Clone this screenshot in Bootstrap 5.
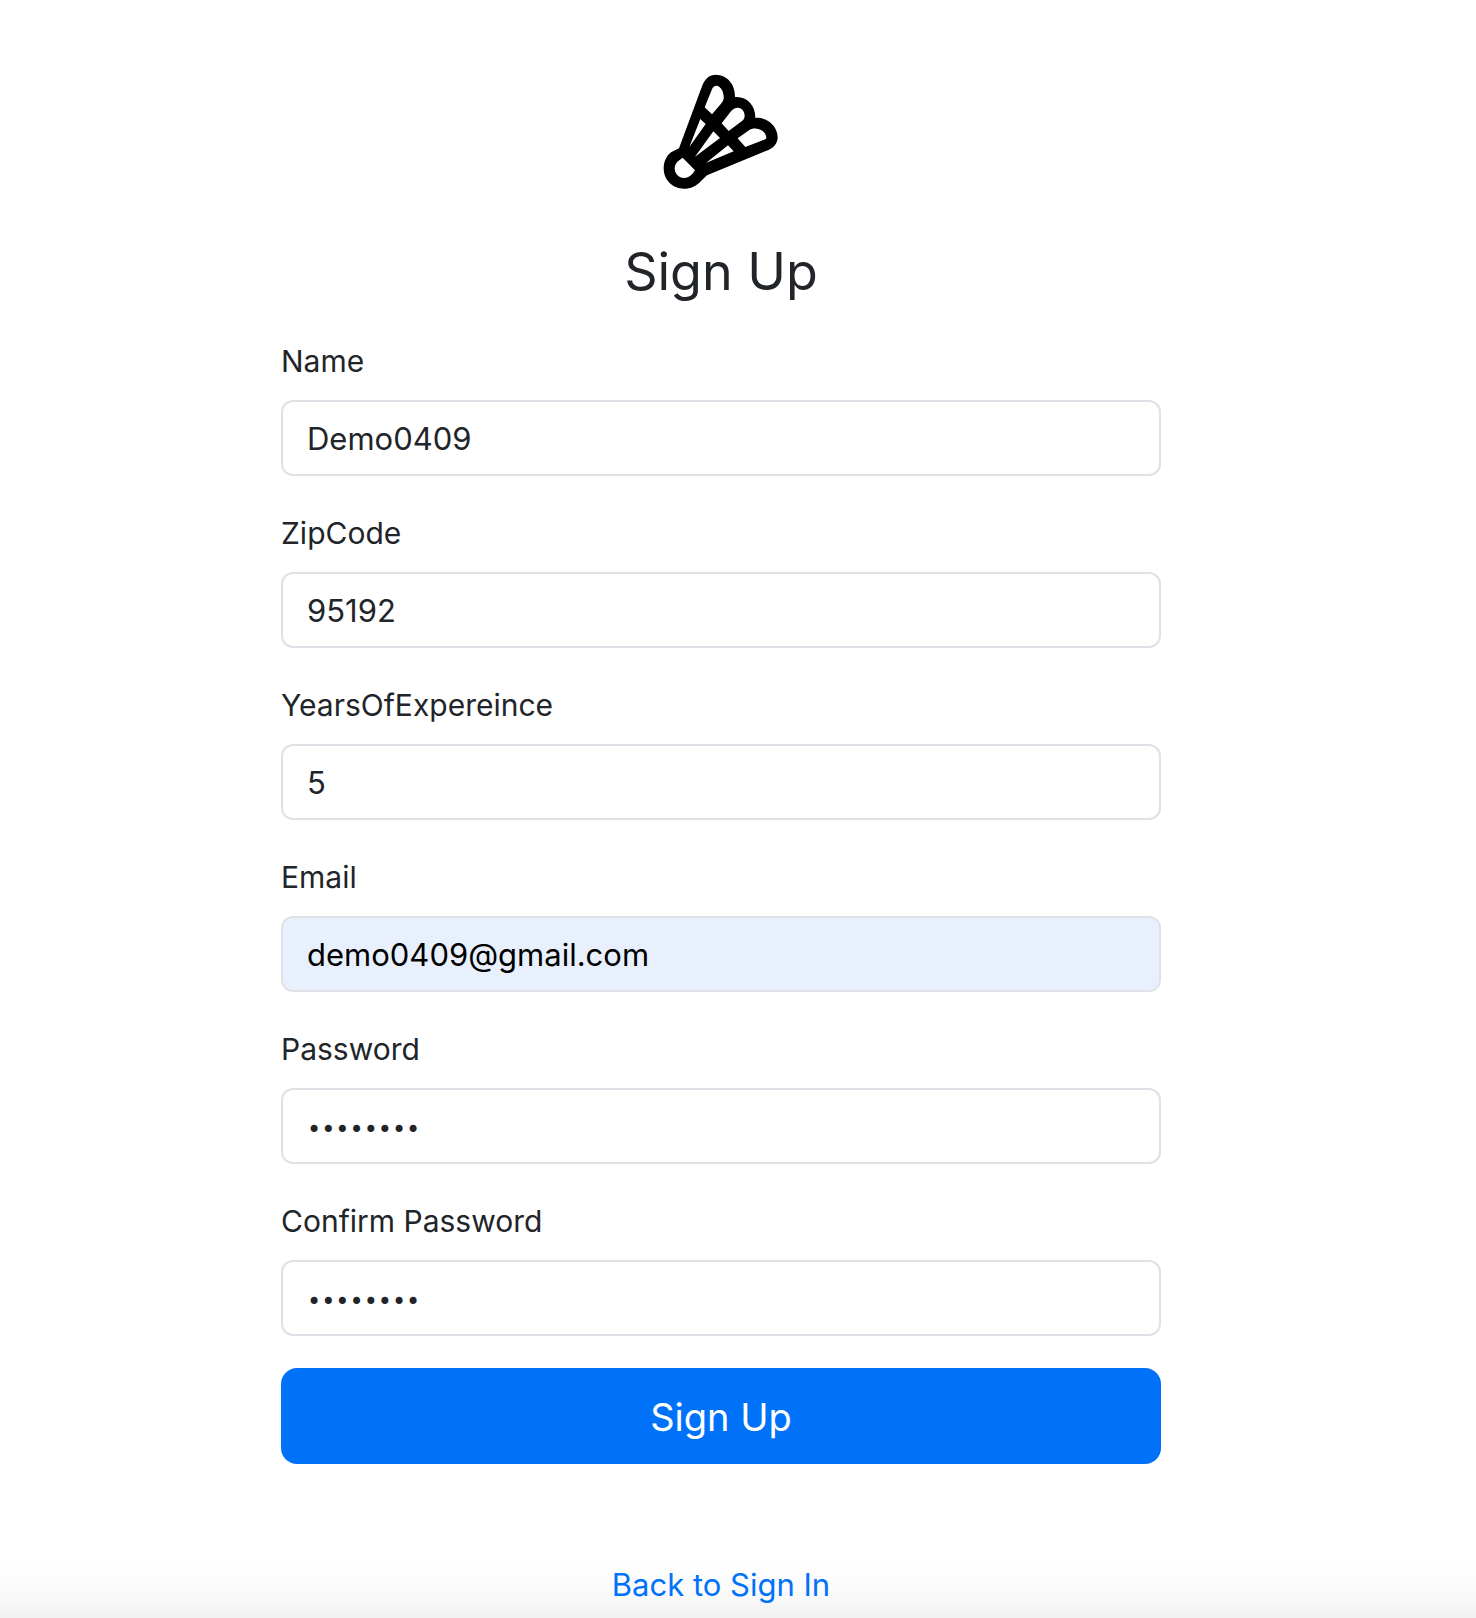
<!DOCTYPE html>
<html lang="en">
<head>
<meta charset="utf-8">
<meta name="viewport" content="width=device-width, initial-scale=1">
<title>Sign Up</title>
<link href="https://cdn.jsdelivr.net/npm/bootstrap@5.3.0/dist/css/bootstrap.min.css" rel="stylesheet">
<style>
  body { font-family: Inter, "Liberation Sans", sans-serif; font-size: 31px; line-height: 48px; padding-right: 34px; min-height: 100vh; background: #fff linear-gradient(to bottom, #fff, #fdfdfd 30%, #f9f9f9 65%, #f1f1f1) no-repeat bottom / 100% 60px; }
  .signup-panel { max-width: 880px; padding-top: 60px; }
  .signup-logo { width: 140px; height: 140px; margin-bottom: 38px; }
  .signup-title { font-size: 52px; line-height: 68px; margin-bottom: 31px; font-weight: 400; }
  .signup-field { margin-bottom: 32px; }
  .signup-field .form-label { margin-bottom: 15px; display: block; font-size: 30px; }
  .signup-field + .signup-field { padding-top: 1px; }
  .signup-field .form-control { height: 76px; padding: 12px 24px; border: 2px solid #dee2e6; border-radius: 12px; font-size: 31px; line-height: 48px; }
  .signup-field .form-control[type="password"] { font-family: "DejaVu Sans", sans-serif; font-size: 24px; padding-top: 16px; padding-bottom: 8px; }
  .signup-field .form-control.prefilled { background-color: #e8f0fe; color: #000; }
  .signup-submit { height: 96px; padding: 18px 16px 16px; border: 0; border-radius: 16px; font-size: 38px; line-height: 60px; background: #0072fa; color: #fff; }
  .signup-back { margin-top: 97px; }
  .signup-back a { color: #0072fa; }
</style>
<script src="https://cdn.jsdelivr.net/npm/bootstrap@5.3.0/dist/js/bootstrap.bundle.min.js"></script>
</head>
<body>
<main class="signup-panel mx-auto">
  <div class="text-center">
    <svg class="signup-logo" viewBox="4 0 420 420" role="img" aria-label="Shuttlecock">
      <path fill="#000" fill-rule="evenodd" d="M88 265L157 79C166 55 180 44 198 44C234 45 257 74 256 111C291 108 318 136 317 174C352 170 384 198 384 232C384 250 372 263 358 269L172 346L155 362C140 378 123 386 103 386C68 386 42 360 42 325C42 305 50 288 64 277Z
      M165 142L187 163L214 131C220 124 223 118 222 109C221 93 214 82 204 78C197 76 190 80 187 88Z
      M216 190L237 213L274 185C281 180 285 175 285 167C285 154 277 144 265 143C256 143 250 147 244 154Z
      M264 235L287 261L344 239C348 238 350 236 350 232C349 220 338 208 322 206C312 205 305 206 296 212Z
      M152 177L168 192L119 261Z M191 214L211 234L136 290Z M235 256L252 274L170 308Z
      M99 293L136 331L128 342C120 350 112 354 103 354C87 354 75 341 75 325C75 316 79 309 86 303Z"/>
    </svg>
    <h1 class="signup-title">Sign Up</h1>
  </div>
  <form>
    <div class="signup-field">
      <label class="form-label" for="name">Name</label>
      <input class="form-control" id="name" type="text" value="Demo0409">
    </div>
    <div class="signup-field">
      <label class="form-label" for="zip">ZipCode</label>
      <input class="form-control" id="zip" type="text" value="95192">
    </div>
    <div class="signup-field">
      <label class="form-label" for="years">YearsOfExpereince</label>
      <input class="form-control" id="years" type="text" value="5">
    </div>
    <div class="signup-field">
      <label class="form-label" for="email">Email</label>
      <input class="form-control prefilled" id="email" type="email" value="demo0409@gmail.com">
    </div>
    <div class="signup-field">
      <label class="form-label" for="password">Password</label>
      <input class="form-control" id="password" type="password" value="demo0409">
    </div>
    <div class="signup-field">
      <label class="form-label" for="confirm">Confirm Password</label>
      <input class="form-control" id="confirm" type="password" value="demo0409">
    </div>
    <button class="btn signup-submit w-100" type="submit">Sign Up</button>
  </form>
  <div class="signup-back text-center">
    <a class="text-decoration-none" href="#">Back to Sign In</a>
  </div>
</main>
</body>
</html>
